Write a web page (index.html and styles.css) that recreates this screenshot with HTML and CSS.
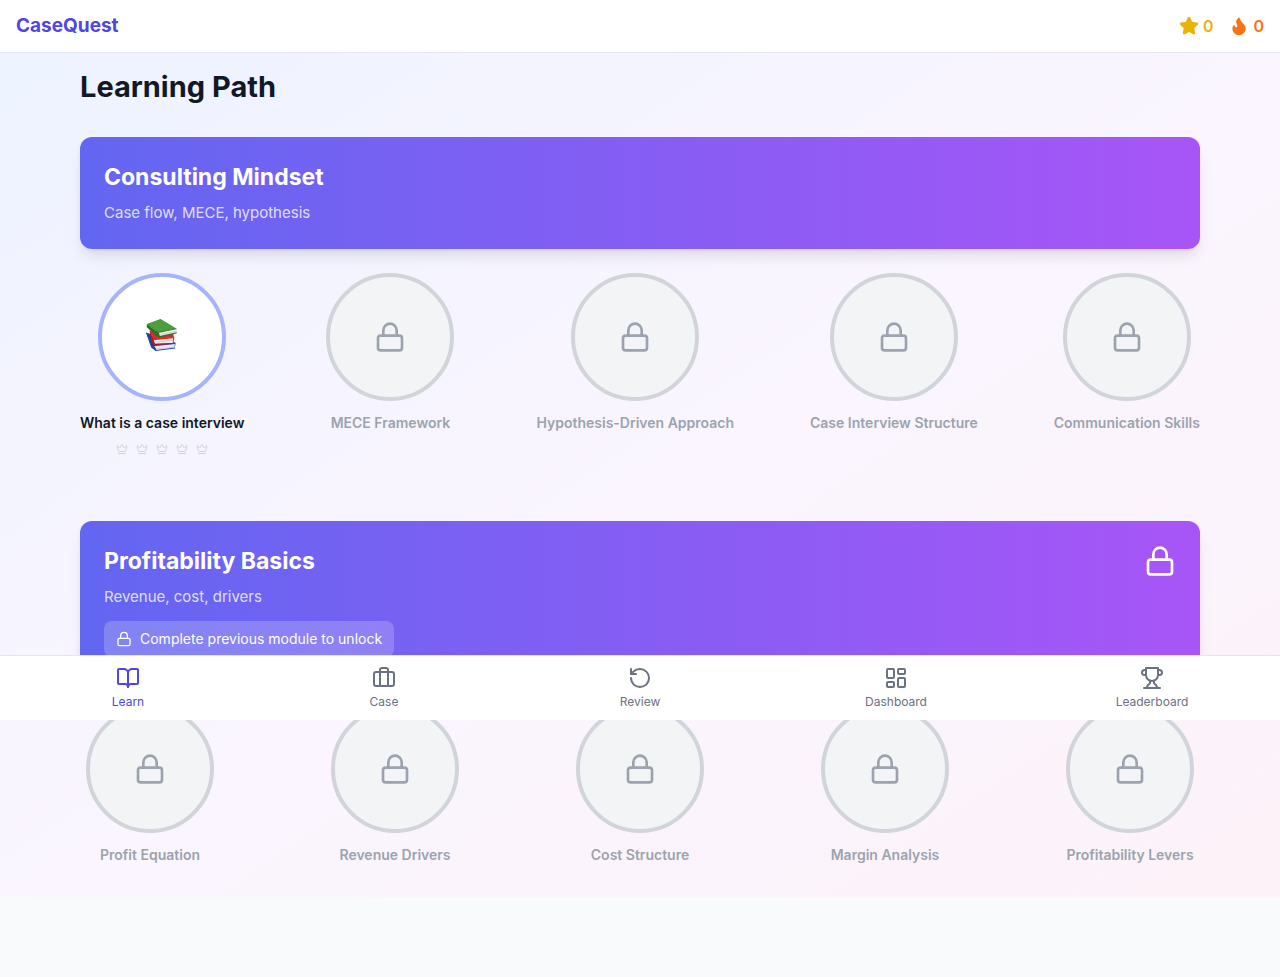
FILE: index.html
```html
<!DOCTYPE html>
<html lang="en">
<head>
<meta charset="utf-8">
<meta name="viewport" content="width=device-width, initial-scale=1">
<title>CaseQuest</title>
<link rel="stylesheet" href="styles.css">
</head>
<body>
<svg class="sprite" aria-hidden="true">
  <symbol id="lock" viewBox="0 0 24 24"><rect x="3" y="11" width="18" height="11" rx="2"/><path d="M7 11V7a5 5 0 0 1 10 0v4"/></symbol>
  <symbol id="crown" viewBox="0 0 24 24"><path d="M11.562 3.266a.5.5 0 0 1 .876 0L15.39 8.87a1 1 0 0 0 1.516.294L21.183 5.5a.5.5 0 0 1 .798.519l-2.834 10.246a1 1 0 0 1-.956.734H5.81a1 1 0 0 1-.957-.734L2.02 6.02a.5.5 0 0 1 .798-.519l4.276 3.664a1 1 0 0 0 1.516-.294z"/><path d="M5 21h14"/></symbol>
</svg>

<header class="topbar">
  <a class="brand" href="#">CaseQuest</a>
  <div class="stats">
    <span class="stat stat-xp"><svg class="icon icon-md icon-solid" viewBox="0 0 24 24" aria-label="Stars"><path d="M11.525 2.295a.53.53 0 0 1 .95 0l2.31 4.679a2.123 2.123 0 0 0 1.595 1.16l5.166.756a.53.53 0 0 1 .294.904l-3.736 3.638a2.123 2.123 0 0 0-.611 1.878l.882 5.14a.53.53 0 0 1-.771.56l-4.618-2.428a2.122 2.122 0 0 0-1.973 0L6.396 21.01a.53.53 0 0 1-.77-.56l.881-5.139a2.122 2.122 0 0 0-.611-1.879L2.16 9.795a.53.53 0 0 1 .294-.906l5.165-.755a2.122 2.122 0 0 0 1.597-1.16z"/></svg>0</span>
    <span class="stat stat-streak"><svg class="icon icon-md icon-solid" viewBox="0 0 24 24" aria-label="Streak"><path d="M8.5 14.5A2.5 2.5 0 0 0 11 12c0-1.38-.5-2-1-3-1.072-2.143-.224-4.054 2-6 .5 2.5 2 4.9 4 6.5 2 1.6 3 3.5 3 5.5a7 7 0 1 1-14 0c0-1.153.433-2.294 1-3a2.5 2.5 0 0 0 2.5 2.5z"/></svg>0</span>
  </div>
</header>

<main class="page">
  <div class="container">
    <h1 class="title">Learning Path</h1>

    <section class="module">
      <div class="banner">
        <div>
          <h2 class="banner-title">Consulting Mindset</h2>
          <p class="banner-text">Case flow, MECE, hypothesis</p>
        </div>
      </div>
      <div class="lessons">
        <button class="lesson lesson-open" type="button">
          <span class="disc">
            <svg class="books" viewBox="0 0 32 32" aria-hidden="true">
              <path d="M0 13.500 5 28.300 9.800 32 29.500 29.600 28.800 28.500 29.800 24 22 20z" fill="#2f4fae"/>
              <path d="M8 27.200 28.800 24.900 28.500 28.500 10 31z" fill="#e6e8ee"/>
              <path d="M8.500 30.200 28.800 28.100" stroke="#b9bcc2" stroke-width=".5"/>
              <path d="M0 13.500 5.800 28.500 9.800 32 10.300 30.500 8.200 27.300 5 17z" fill="#24408f"/>
              <path d="M3.500 11.500 27 14 28.300 19 27.200 24.800 8.300 25.600 6 23z" fill="#d92f27"/>
              <path d="M7.300 21.300 27 19.300 26.800 24 8.500 25z" fill="#eeeae8"/>
              <path d="M8 23.200 26.800 21.500" stroke="#b9b9b9" stroke-width=".6"/>
              <path d="M3.500 11.500 6.200 22.800 8.300 26 27.200 24.900 27 24.100 9 24.700 7.600 21.500z" fill="#a61520"/>
              <path d="M1 5 14.500 0 31.500 10.200 13 14.300z" fill="#3f9433"/>
              <path d="M2 5 14.500.4 29 9 12.500 12.600z" fill="#4ba03c"/>
              <path d="M12.500 14 31 10.300 30.400 13.800 13 17.800z" fill="#f0f1ec"/>
              <path d="M13 16 30.500 12.200" stroke="#babcb7" stroke-width=".6"/>
              <path d="M1 5 .6 8 11.500 18 13.300 18.400 30.900 14.200 30.700 13.300 13.900 17 13 14.300z" fill="#2b7028"/>
            </svg>
          </span>
          <span class="lesson-name">What is a case interview</span>
          <span class="crowns">
            <svg class="icon icon-xs"><use href="#crown"/></svg>
            <svg class="icon icon-xs"><use href="#crown"/></svg>
            <svg class="icon icon-xs"><use href="#crown"/></svg>
            <svg class="icon icon-xs"><use href="#crown"/></svg>
            <svg class="icon icon-xs"><use href="#crown"/></svg>
          </span>
        </button>
        <button class="lesson" type="button" disabled><span class="disc"><svg class="icon icon-xl"><use href="#lock"/></svg></span><span class="lesson-name">MECE Framework</span></button>
        <button class="lesson" type="button" disabled><span class="disc"><svg class="icon icon-xl"><use href="#lock"/></svg></span><span class="lesson-name">Hypothesis-Driven Approach</span></button>
        <button class="lesson" type="button" disabled><span class="disc"><svg class="icon icon-xl"><use href="#lock"/></svg></span><span class="lesson-name">Case Interview Structure</span></button>
        <button class="lesson" type="button" disabled><span class="disc"><svg class="icon icon-xl"><use href="#lock"/></svg></span><span class="lesson-name">Communication Skills</span></button>
      </div>
    </section>

    <section class="module">
      <div class="banner">
        <div>
          <h2 class="banner-title">Profitability Basics</h2>
          <p class="banner-text">Revenue, cost, drivers</p>
          <p class="notice"><svg class="icon icon-sm"><use href="#lock"/></svg>Complete previous module to unlock</p>
        </div>
        <svg class="icon icon-xl"><use href="#lock"/></svg>
      </div>
      <div class="lessons">
        <button class="lesson" type="button" disabled><span class="disc"><svg class="icon icon-xl"><use href="#lock"/></svg></span><span class="lesson-name">Profit Equation</span></button>
        <button class="lesson" type="button" disabled><span class="disc"><svg class="icon icon-xl"><use href="#lock"/></svg></span><span class="lesson-name">Revenue Drivers</span></button>
        <button class="lesson" type="button" disabled><span class="disc"><svg class="icon icon-xl"><use href="#lock"/></svg></span><span class="lesson-name">Cost Structure</span></button>
        <button class="lesson" type="button" disabled><span class="disc"><svg class="icon icon-xl"><use href="#lock"/></svg></span><span class="lesson-name">Margin Analysis</span></button>
        <button class="lesson" type="button" disabled><span class="disc"><svg class="icon icon-xl"><use href="#lock"/></svg></span><span class="lesson-name">Profitability Levers</span></button>
      </div>
    </section>
  </div>
</main>

<nav class="tabbar" aria-label="Main">
  <a class="tab tab-active" href="#" aria-current="page"><svg class="icon icon-lg" viewBox="0 0 24 24"><path d="M12 7v14"/><path d="M3 18a1 1 0 0 1-1-1V4a1 1 0 0 1 1-1h5a4 4 0 0 1 4 4 4 4 0 0 1 4-4h5a1 1 0 0 1 1 1v13a1 1 0 0 1-1 1h-6a3 3 0 0 0-3 3 3 3 0 0 0-3-3z"/></svg>Learn</a>
  <a class="tab" href="#"><svg class="icon icon-lg" viewBox="0 0 24 24"><path d="M16 20V4a2 2 0 0 0-2-2h-4a2 2 0 0 0-2 2v16"/><rect x="2" y="6" width="20" height="14" rx="2"/></svg>Case</a>
  <a class="tab" href="#"><svg class="icon icon-lg" viewBox="0 0 24 24"><path d="M3 12a9 9 0 1 0 9-9 9.750 9.750 0 0 0-6.740 2.740L3 8"/><path d="M3 3v5h5"/></svg>Review</a>
  <a class="tab" href="#"><svg class="icon icon-lg" viewBox="0 0 24 24"><rect x="3" y="3" width="7" height="9" rx="1"/><rect x="14" y="3" width="7" height="5" rx="1"/><rect x="14" y="12" width="7" height="9" rx="1"/><rect x="3" y="16" width="7" height="5" rx="1"/></svg>Dashboard</a>
  <a class="tab" href="#"><svg class="icon icon-lg" viewBox="0 0 24 24"><path d="M6 9H4.500a2.500 2.500 0 0 1 0-5H6"/><path d="M18 9h1.500a2.500 2.500 0 0 0 0-5H18"/><path d="M4 22h16"/><path d="M10 14.660V17c0 .550-.470.980-.970 1.210C7.850 18.750 7 20.240 7 22"/><path d="M14 14.660V17c0 .550.470.980.970 1.210C16.150 18.750 17 20.240 17 22"/><path d="M18 2H6v7a6 6 0 0 0 12 0V2Z"/></svg>Leaderboard</a>
</nav>
</body>
</html>
```

FILE: styles.css
```css
* {
  box-sizing: border-box;
}

body {
  margin: 0;
  padding-bottom: 80px;
  background: #f9fafb;
  color: #111827;
  font-family: Inter, "Liberation Sans", sans-serif;
  font-size: 16px;
  line-height: 24px;
}

h1, h2, p {
  margin: 0;
}

a {
  color: inherit;
  text-decoration: none;
}

.sprite {
  position: absolute;
  width: 0;
  height: 0;
}

.icon {
  display: block;
  flex: none;
  fill: none;
  stroke: currentColor;
  stroke-width: 2;
  stroke-linecap: round;
  stroke-linejoin: round;
}

.icon-solid { fill: currentColor; }
.icon-xs { width: 12px; height: 12px; }
.icon-sm { width: 16px; height: 16px; }
.icon-md { width: 20px; height: 20px; }
.icon-lg { width: 24px; height: 24px; }
.icon-xl { width: 32px; height: 32px; }

.topbar {
  display: flex;
  align-items: center;
  justify-content: space-between;
  padding: 12px 16px;
  background: #fff;
  border-bottom: 1px solid #e5e7eb;
}

.brand {
  color: #4f46e5;
  font-size: 19px;
  font-weight: 700;
  line-height: 28px;
}

.stats {
  display: flex;
  gap: 16px;
}

.stat {
  display: flex;
  align-items: center;
  gap: 4px;
  font-weight: 600;
}

.stat-xp { color: #eab308; }
.stat-streak { color: #f97316; }

.page {
  padding: 16px 16px 32px;
  background: linear-gradient(to bottom right, #edf3ff, #faf5ff, #fdf2f8);
}

.container {
  max-width: 1120px;
  margin: 0 auto;
}

.title {
  margin-bottom: 32px;
  font-size: 29px;
  font-weight: 700;
  line-height: 36px;
}

.module + .module {
  margin-top: 64px;
}

.banner {
  display: flex;
  align-items: flex-start;
  justify-content: space-between;
  margin-bottom: 24px;
  padding: 24px;
  border-radius: 12px;
  background: linear-gradient(to right, #6366f1, #a855f7);
  box-shadow: 0 10px 15px -3px rgba(0, 0, 0, 0.1), 0 4px 6px -4px rgba(0, 0, 0, 0.1);
  color: #fff;
}

.banner-title {
  margin-bottom: 8px;
  font-size: 23px;
  font-weight: 700;
  line-height: 32px;
}

.banner-text {
  color: rgba(255, 255, 255, 0.8);
  font-size: 15px;
}

.notice {
  display: flex;
  align-items: center;
  gap: 8px;
  width: fit-content;
  margin-top: 12px;
  padding: 8px 12px;
  border-radius: 8px;
  background: rgba(255, 255, 255, 0.2);
  font-size: 14px;
  line-height: 20px;
}

.lessons {
  display: flex;
  align-items: flex-start;
  justify-content: space-between;
}

.lesson {
  display: flex;
  flex-direction: column;
  align-items: center;
  min-width: 140px;
  padding: 0;
  border: 0;
  background: none;
  color: #9ca3af;
  font: inherit;
}

.disc {
  display: flex;
  align-items: center;
  justify-content: center;
  width: 128px;
  height: 128px;
  border: 4px solid #d1d5db;
  border-radius: 50%;
  background: #f3f4f6;
}

.lesson-name {
  margin-top: 12px;
  font-size: 14px;
  font-weight: 600;
  line-height: 20px;
  white-space: nowrap;
}

.lesson-open {
  color: #111827;
  cursor: pointer;
}

.lesson-open .disc {
  border-color: #a5b4fc;
  background: #fff;
}

.books {
  width: 32px;
  height: 32px;
  margin-bottom: 4px;
}

.crowns {
  display: flex;
  align-items: center;
  gap: 8px;
  height: 16px;
  margin-top: 8px;
  color: #d1d5db;
}

/* Floats over the lesson list */
.tabbar {
  position: absolute;
  top: 655px;
  left: 0;
  right: 0;
  display: flex;
  background: #fff;
  border-top: 1px solid #e5e7eb;
}

.tab {
  display: flex;
  flex: 1;
  flex-direction: column;
  align-items: center;
  gap: 4px;
  padding: 10px 0;
  color: #6b7280;
  font-size: 12px;
  line-height: 16px;
}

.tab-active {
  color: #4f46e5;
}
```
